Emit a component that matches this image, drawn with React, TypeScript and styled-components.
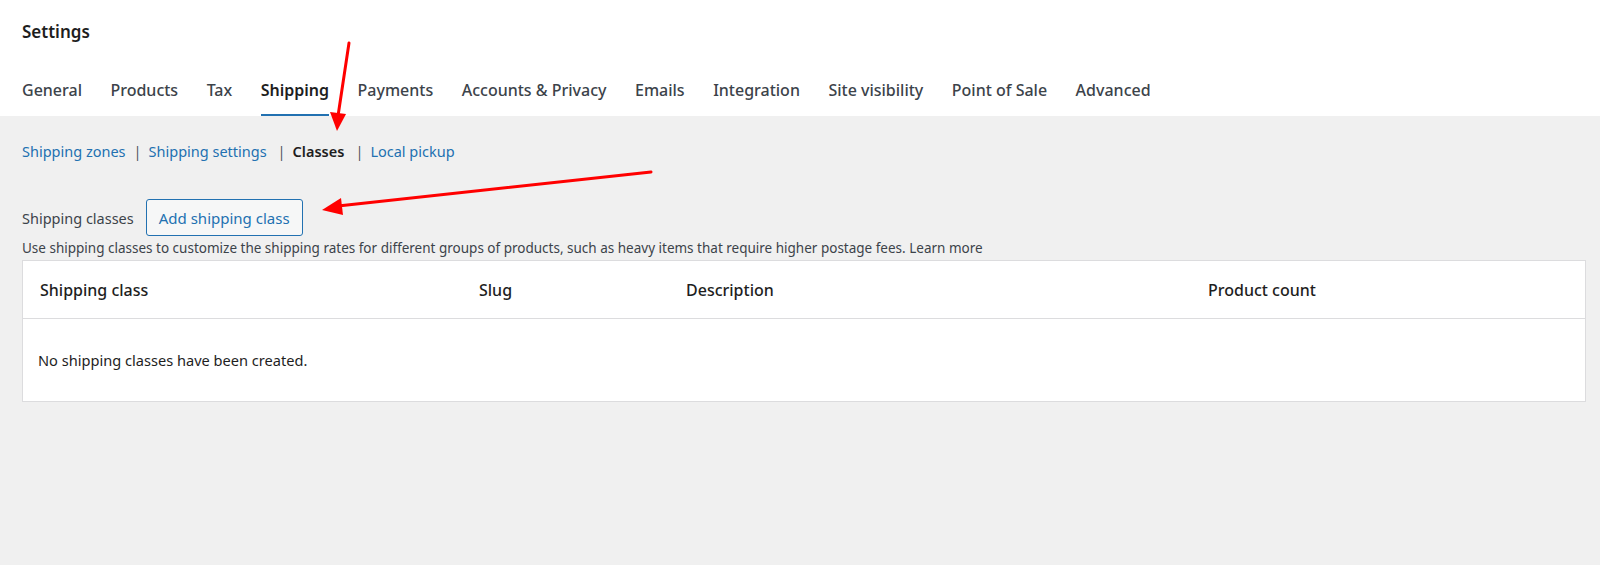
import React from "react";
import styled, { createGlobalStyle } from "styled-components";

const GlobalStyle = createGlobalStyle`
  html, body {
    margin: 0;
    padding: 0;
    background: #f0f0f0;
  }
  body {
    font-family: "Noto Sans", "Open Sans", sans-serif;
    color: #1e1e1e;
  }
  * {
    box-sizing: border-box;
  }
`;

const Page = styled.div`
  position: relative;
  min-height: 565px;
  background: #f0f0f0;
`;

const Header = styled.header`
  background: #ffffff;
  padding: 20px 22px 0;
`;

const Title = styled.h1`
  margin: 0;
  font-size: 17px;
  font-weight: 600;
  line-height: 24px;
  color: #1e1e1e;
`;

const Tabs = styled.nav`
  display: flex;
  gap: 28.5px;
  margin-top: 36px;
`;

const Tab = styled.a<{ $active?: boolean }>`
  display: block;
  font-size: 16px;
  line-height: 20px;
  padding-bottom: 14px;
  border-bottom: 2px solid ${(p) => (p.$active ? "#2271b1" : "transparent")};
  color: ${(p) => (p.$active ? "#1e1e1e" : "#3c434a")};
  font-weight: ${(p) => (p.$active ? 600 : 500)};
  text-decoration: none;
  cursor: pointer;
`;

const Content = styled.main`
  padding: 25px 14px 0 22px;
`;

const SubNav = styled.ul`
  display: flex;
  align-items: center;
  margin: 0;
  padding: 0;
  list-style: none;
  font-size: 14.5px;
  line-height: 20px;
`;

const SubItem = styled.li<{ $current?: boolean }>`
  color: ${(p) => (p.$current ? "#1e1e1e" : "#2271b1")};
  font-weight: ${(p) => (p.$current ? 600 : 400)};
  cursor: pointer;
`;

const Sep = styled.li<{ $wide?: boolean }>`
  color: #50575e;
  padding: 0 7px 0 ${(p) => (p.$wide ? 11 : 8)}px;
`;

const ClassesRow = styled.div`
  display: flex;
  align-items: center;
  gap: 12px;
  margin-top: 38px;
`;

const Label = styled.span`
  font-size: 14.5px;
  color: #3c434a;
`;

const Button = styled.button`
  height: 37px;
  padding: 0 12px;
  background: #f6f7f7;
  border: 1px solid #2271b1;
  border-radius: 3px;
  color: #2271b1;
  font-family: inherit;
  font-size: 15px;
  cursor: pointer;
`;

const Help = styled.p`
  margin: 3px 0 0;
  font-size: 13.5px;
  line-height: 18px;
  color: #3c434a;
`;

const Table = styled.div`
  margin-top: 3px;
  background: #ffffff;
  border: 1px solid #dcdcde;
`;

const HeadRow = styled.div`
  display: grid;
  grid-template-columns: 439px 207px 522px 1fr;
  height: 58px;
  align-items: center;
  border-bottom: 1px solid #dcdcde;
`;

const HeadCell = styled.div`
  padding-left: 17px;
  font-size: 16px;
  font-weight: 500;
  color: #1e1e1e;
`;

const EmptyRow = styled.div`
  height: 82px;
  display: flex;
  align-items: center;
  padding-left: 15px;
  font-size: 14.6px;
  color: #1e1e1e;
`;

const Annotations = styled.svg`
  position: absolute;
  top: 0;
  left: 0;
  pointer-events: none;
`;

const tabs = [
  "General",
  "Products",
  "Tax",
  "Shipping",
  "Payments",
  "Accounts & Privacy",
  "Emails",
  "Integration",
  "Site visibility",
  "Point of Sale",
  "Advanced",
];

const sections = ["Shipping zones", "Shipping settings", "Classes", "Local pickup"];

const columns = ["Shipping class", "Slug", "Description", "Product count"];

const App: React.FC = () => {
  return (
    <Page>
      <GlobalStyle />
      <Header>
        <Title>Settings</Title>
        <Tabs>
          {tabs.map((t) => (
            <Tab key={t} $active={t === "Shipping"}>
              {t}
            </Tab>
          ))}
        </Tabs>
      </Header>
      <Content>
        <SubNav>
          {sections.map((s, i) => (
            <React.Fragment key={s}>
              {i > 0 && <Sep $wide={i > 1}>|</Sep>}
              <SubItem $current={s === "Classes"}>{s}</SubItem>
            </React.Fragment>
          ))}
        </SubNav>
        <ClassesRow>
          <Label>Shipping classes</Label>
          <Button>Add shipping class</Button>
        </ClassesRow>
        <Help>
          Use shipping classes to customize the shipping rates for different groups of products, such
          as heavy items that require higher postage fees. Learn more
        </Help>
        <Table>
          <HeadRow>
            {columns.map((c) => (
              <HeadCell key={c}>{c}</HeadCell>
            ))}
          </HeadRow>
          <EmptyRow>No shipping classes have been created.</EmptyRow>
        </Table>
      </Content>
      <Annotations width="1600" height="565" viewBox="0 0 1600 565">
        <g stroke="#ff0000" strokeWidth="3" strokeLinecap="round" fill="#ff0000">
          <line x1="349" y1="43" x2="338" y2="116" />
          <polygon points="330,112 346,114 337,131" stroke="none" />
          <line x1="651" y1="172" x2="338" y2="206" />
          <polygon points="341,198 343,215 322,210" stroke="none" />
        </g>
      </Annotations>
    </Page>
  );
};

export default App;
